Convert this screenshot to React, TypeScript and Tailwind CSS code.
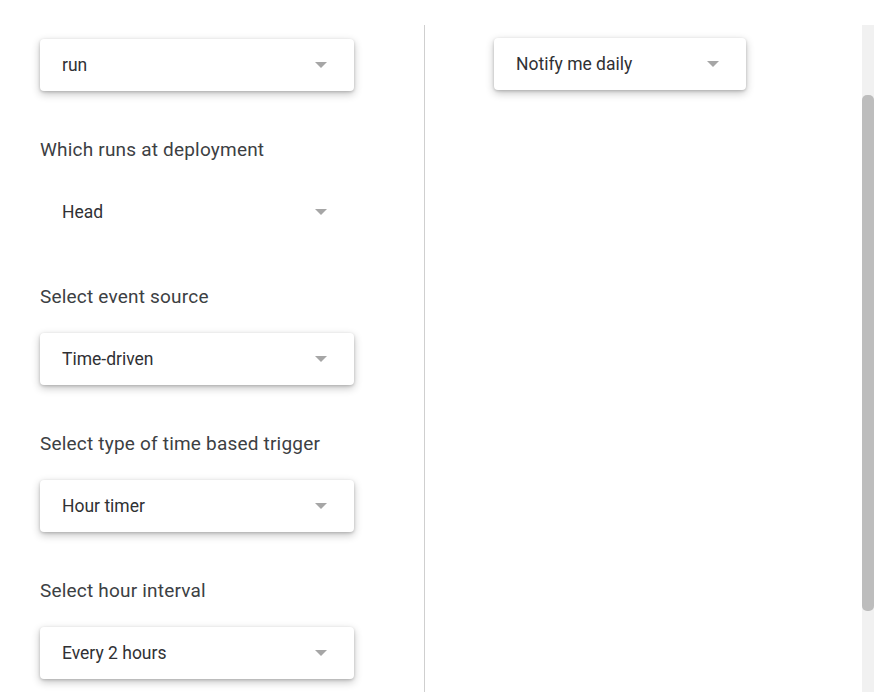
import React from "react"

interface SelectBoxProps {
  value: string
  flat?: boolean
  width?: string
}

function Caret() {
  return (
    <svg width="12" height="6" viewBox="0 0 12 6" className="shrink-0">
      <path d="M0 0 L12 0 L6 6 Z" fill="#a6a6a6" />
    </svg>
  )
}

function SelectBox({ value, flat, width = "w-[314px]" }: SelectBoxProps) {
  return (
    <div
      className={`${width} h-[52px] flex items-center justify-between pl-[22px] pr-[27px] rounded-[4px] bg-white ${
        flat ? "" : "shadow-[0_3px_8px_rgba(0,0,0,0.24),0_1px_3px_rgba(0,0,0,0.18)]"
      }`}
    >
      <span className="text-[17.5px] text-[#303134] leading-none pt-[1px]">{value}</span>
      <Caret />
    </div>
  )
}

function Section({ label, value, flat }: { label: string, value: string, flat?: boolean }) {
  return (
    <div className="flex flex-col mt-[47px]">
      <div className="text-[19px] leading-[24px] tracking-[0.2px] text-[#3c4043] h-[24px]">{label}</div>
      <div className="mt-[24px]">
        <SelectBox value={value} flat={flat} />
      </div>
    </div>
  )
}

export default function App() {
  return (
    <div
      className="w-[888px] h-[697px] bg-white flex pt-[25px] pb-[5px] overflow-hidden"
      style={{ fontFamily: "Roboto, 'Liberation Sans', sans-serif" }}
    >
      {/* left column */}
      <div className="w-[425px] shrink-0 pl-[40px] pt-[14px] border-r border-[#cfcfcf] flex flex-col">
        <SelectBox value="run" />
        <Section label="Which runs at deployment" value="Head" flat />
        <Section label="Select event source" value="Time-driven" />
        <Section label="Select type of time based trigger" value="Hour timer" />
        <Section label="Select hour interval" value="Every 2 hours" />
      </div>

      {/* right column */}
      <div className="w-[437px] shrink-0 pl-[69px] pt-[13px]">
        <SelectBox value="Notify me daily" width="w-[252px]" />
      </div>

      {/* scrollbar */}
      <div className="w-[12px] shrink-0 bg-[#f1f1f1] flex flex-col">
        <div className="mt-[70px] h-[516px] bg-[#bdbdbd] rounded-[5px]" />
      </div>
    </div>
  )
}
